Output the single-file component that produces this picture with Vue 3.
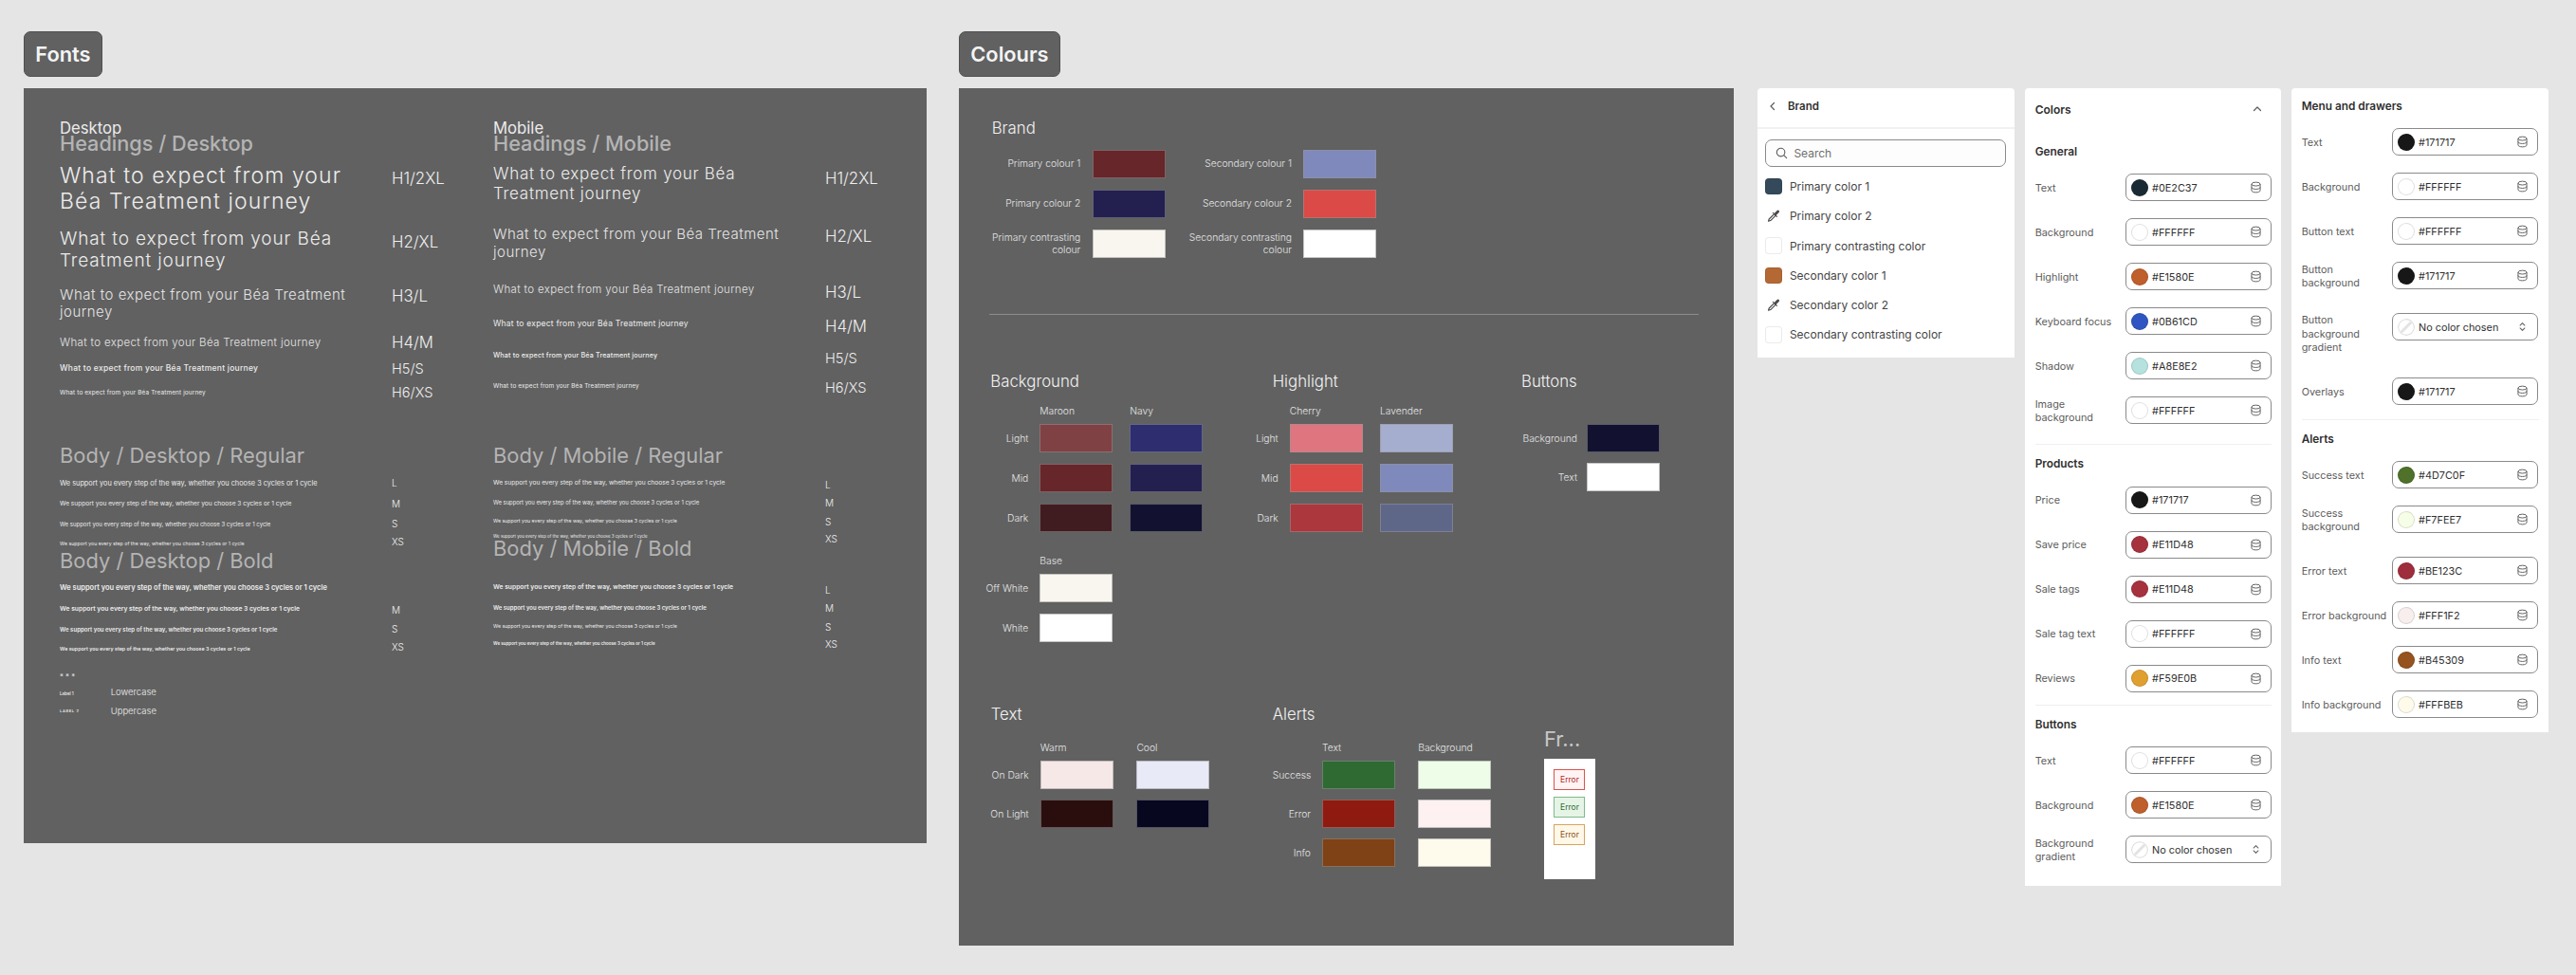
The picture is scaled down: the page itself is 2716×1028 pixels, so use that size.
<script setup>
const JOURNEY = 'What to expect from your Béa Treatment journey'
const BODY = 'We support you every step of the way, whether you choose 3 cycles or 1 cycle'

const desktop = [
  { t: 'Desktop', c: 'kicker', h: 18, mt: 33 },
  { t: 'Headings / Desktop', c: 'gtitle', h: 24, mt: -5 },
  { t: JOURNEY, c: 'd1', h: 71.7, lab: 'H1/2XL', d: -11 },
  { t: JOURNEY, c: 'd2', h: 57.6, lab: 'H2/XL', d: -8.5 },
  { t: JOURNEY, c: 'd3', h: 55.4, lab: 'H3/L', d: -8 },
  { t: JOURNEY, c: 'd4', h: 26, lab: 'H4/M', d: 0.3 },
  { t: JOURNEY, c: 'd5', h: 30.6, lab: 'H5/S', lc: 'small' },
  { t: JOURNEY, c: 'd6', h: 19.4, lab: 'H6/XS', lc: 'small' },
  { t: 'Body / Desktop / Regular', c: 'btitle', h: 30, mt: 41.3 },
  { t: BODY, c: 'dl', h: 28.6, lab: 'L', lc: 'tiny', d: -0.6 },
  { t: BODY, c: 'dm', h: 16.2, lab: 'M', lc: 'tiny', d: -1 },
  { t: BODY, c: 'ds', h: 26.4, lab: 'S', lc: 'tiny', d: -1.3 },
  { t: BODY, c: 'dx', h: 14.2, lab: 'XS', lc: 'tiny', d: -2.3 },
  { t: 'Body / Desktop / Bold', c: 'btitle', h: 30, mt: -4.4 },
  { t: BODY, c: 'dbl', h: 28.6 },
  { t: BODY, c: 'dbm', h: 16.2, lab: 'M', lc: 'tiny' },
  { t: BODY, c: 'dbs', h: 26.4, lab: 'S', lc: 'tiny', d: -0.7 },
  { t: BODY, c: 'dbx', h: 14.2, lab: 'XS', lc: 'tiny', d: -2 },
]
const mobile = [
  { t: 'Mobile', c: 'kicker', h: 18, mt: 33 },
  { t: 'Headings / Mobile', c: 'gtitle', h: 24, mt: -5 },
  { t: JOURNEY, c: 'm1', h: 62, lab: 'H1/2XL', d: -6 },
  { t: JOURNEY, c: 'm2', h: 63, lab: 'H2/XL', d: -7.2 },
  { t: JOURNEY, c: 'm3', h: 33.4, lab: 'H3/L', d: 3 },
  { t: JOURNEY, c: 'm4', h: 39.8, lab: 'H4/M', d: 2.4 },
  { t: JOURNEY, c: 'm5', h: 27, lab: 'H5/S', lc: 'small', d: 3 },
  { t: JOURNEY, c: 'm6', h: 37, lab: 'H6/XS', lc: 'small', d: 2.6 },
  { t: 'Body / Mobile / Regular', c: 'btitle', h: 30, mt: 39.8 },
  { t: BODY, c: 'ml', h: 28, lab: 'L', lc: 'tiny', d: 2 },
  { t: BODY, c: 'mm', h: 14, lab: 'M', lc: 'tiny', d: 0.3 },
  { t: BODY, c: 'ms', h: 26, lab: 'S', lc: 'tiny' },
  { t: BODY, c: 'mx', h: 6.6, lab: 'XS', lc: 'tiny', d: 1.4 },
  { t: 'Body / Mobile / Bold', c: 'btitle', h: 30, mt: -6.6 },
  { t: BODY, c: 'mbl', h: 20, mt: 16.7, lab: 'L', lc: 'tiny', d: 2 },
  { t: BODY, c: 'mbm', h: 22.6, lab: 'M', lc: 'tiny', d: 0.3 },
  { t: BODY, c: 'ms', h: 17.4, lab: 'S', lc: 'tiny' },
  { t: BODY, c: 'mbx', h: 18.6, lab: 'XS', lc: 'tiny' },
]
function rowStyle(r) {
  return { height: r.h + 'px', marginTop: (r.mt || 0) + 'px' }
}
function labStyle(r) {
  const d = r.d || 0
  return d > 0 ? { marginTop: 2 * d + 'px' } : { marginBottom: -2 * d + 'px' }
}

const brandLeft = [
  { l: 'Primary colour 1', c: '#66262a' },
  { l: 'Primary colour 2', c: '#232050' },
  { l: 'Primary contrasting colour', c: '#f9f6ef' },
]
const brandRight = [
  { l: 'Secondary colour 1', c: '#7f89bb' },
  { l: 'Secondary colour 2', c: '#db4a47' },
  { l: 'Secondary contrasting colour', c: '#ffffff' },
]
const bgRows = [
  { l: 'Light', c: ['#804144', '#2d2d70'] },
  { l: 'Mid', c: ['#66262a', '#232050'] },
  { l: 'Dark', c: ['#401c20', '#121230'] },
]
const hlRows = [
  { l: 'Light', c: ['#de757f', '#a6aed0'] },
  { l: 'Mid', c: ['#db4a47', '#7f89bb'] },
  { l: 'Dark', c: ['#ac373c', '#5f6789'] },
]
const baseRows = [
  { l: 'Off White', c: ['#f9f6ef'] },
  { l: 'White', c: ['#ffffff'] },
]
const btnRows = [
  { l: 'Background', c: ['#121230'] },
  { l: 'Text', c: ['#ffffff'] },
]
const textRows = [
  { l: 'On Dark', c: ['#f7e8e8', '#e8eaf7'] },
  { l: 'On Light', c: ['#2a0e0e', '#070720'] },
]
const alertRows = [
  { l: 'Success', c: ['#2f6a33', '#eefde8'] },
  { l: 'Error', c: ['#8f1a10', '#fdf1f1'] },
  { l: 'Info', c: ['#7f4116', '#fefbec'] },
]

const brandList = [
  { l: 'Primary color 1', c: '#344a5a' },
  { l: 'Primary color 2', pick: true },
  { l: 'Primary contrasting color', c: '#ffffff' },
  { l: 'Secondary color 1', c: '#b46935' },
  { l: 'Secondary color 2', pick: true },
  { l: 'Secondary contrasting color', c: '#ffffff' },
]

const colorSections = [
  { title: 'General', rows: [
    { l: 'Text', c: '#1a2a35', v: '#0E2C37' },
    { l: 'Background', c: '#ffffff', v: '#FFFFFF' },
    { l: 'Highlight', c: '#bf5f2c', v: '#E1580E' },
    { l: 'Keyboard focus', c: '#2f55c2', v: '#0B61CD' },
    { l: 'Shadow', c: '#b5e2de', v: '#A8E8E2' },
    { l: 'Image background', c: '#ffffff', v: '#FFFFFF', end: true },
  ] },
  { title: 'Products', rows: [
    { l: 'Price', c: '#171717', v: '#171717' },
    { l: 'Save price', c: '#a6323e', v: '#E11D48' },
    { l: 'Sale tags', c: '#a6323e', v: '#E11D48' },
    { l: 'Sale tag text', c: '#ffffff', v: '#FFFFFF' },
    { l: 'Reviews', c: '#e0a030', v: '#F59E0B', short: true },
  ] },
  { title: 'Buttons', rows: [
    { l: 'Text', c: '#ffffff', v: '#FFFFFF' },
    { l: 'Background', c: '#bf5f2c', v: '#E1580E' },
    { l: 'Background gradient', none: true },
  ] },
]
const menuSections = [
  { title: 'Menu and drawers', rows: [
    { l: 'Text', c: '#171717', v: '#171717' },
    { l: 'Background', c: '#ffffff', v: '#FFFFFF' },
    { l: 'Button text', c: '#ffffff', v: '#FFFFFF' },
    { l: 'Button background', c: '#171717', v: '#171717', tall: true },
    { l: 'Button background gradient', none: true, tall: true },
    { l: 'Overlays', c: '#171717', v: '#171717' },
  ] },
  { title: 'Alerts', rows: [
    { l: 'Success text', c: '#4f7129', v: '#4D7C0F' },
    { l: 'Success background', c: '#f7fee7', v: '#F7FEE7', tall: true },
    { l: 'Error text', c: '#9f2e3d', v: '#BE123C' },
    { l: 'Error background', c: '#f8eeee', v: '#FFF1F2' },
    { l: 'Info text', c: '#96531f', v: '#B45309' },
    { l: 'Info background', c: '#fffbeb', v: '#FFFBEB' },
  ] },
]
</script>

<template>
  <div class="canvas">
    <section class="area">
      <div class="tag">Fonts</div>
      <div class="frame fonts">
        <div v-for="(col, i) in [desktop, mobile]" :key="i" class="col">
          <div v-for="(r, j) in col" :key="j" class="row" :style="rowStyle(r)">
            <div class="txt" :class="r.c">{{ r.t }}</div>
            <div v-if="r.lab" class="lab" :class="r.lc" :style="labStyle(r)">{{ r.lab }}</div>
          </div>
          <template v-if="i === 0">
            <div class="dots">* * *</div>
            <div class="lrow first"><span class="label1">Label 1</span><span class="lname">Lowercase</span></div>
            <div class="lrow"><span class="label2">LABEL 2</span><span class="lname">Uppercase</span></div>
          </template>
        </div>
      </div>
    </section>

    <section class="area">
      <div class="tag">Colours</div>
      <div class="frame colours">
        <h3 class="cap brand-cap">Brand</h3>
        <div class="brand-cols">
          <div class="brand-col">
            <div v-for="s in brandLeft" :key="s.l" class="sw-row">
              <span class="sw-label bl">{{ s.l }}</span>
              <span class="sw" :style="{ background: s.c }"></span>
            </div>
          </div>
          <div class="brand-col">
            <div v-for="s in brandRight" :key="s.l" class="sw-row">
              <span class="sw-label br">{{ s.l }}</span>
              <span class="sw" :style="{ background: s.c }"></span>
            </div>
          </div>
        </div>
        <div class="rule"></div>

        <div class="groups one">
          <div class="group g-bg">
            <h3 class="cap">Background</h3>
            <div class="heads"><span class="head">Maroon</span><span class="head">Navy</span></div>
            <div v-for="r in bgRows" :key="r.l" class="gr">
              <span class="gl">{{ r.l }}</span>
              <span v-for="c in r.c" :key="c" class="sw" :style="{ background: c }"></span>
            </div>
            <div class="heads base"><span class="head">Base</span></div>
            <div v-for="r in baseRows" :key="r.l" class="gr">
              <span class="gl">{{ r.l }}</span>
              <span v-for="c in r.c" :key="c" class="sw" :style="{ background: c }"></span>
            </div>
          </div>
          <div class="group g-hl">
            <h3 class="cap">Highlight</h3>
            <div class="heads"><span class="head">Cherry</span><span class="head">Lavender</span></div>
            <div v-for="r in hlRows" :key="r.l" class="gr">
              <span class="gl">{{ r.l }}</span>
              <span v-for="c in r.c" :key="c" class="sw" :style="{ background: c }"></span>
            </div>
          </div>
          <div class="group g-btn">
            <h3 class="cap">Buttons</h3>
            <div class="heads"></div>
            <div v-for="r in btnRows" :key="r.l" class="gr">
              <span class="gl">{{ r.l }}</span>
              <span v-for="c in r.c" :key="c" class="sw" :style="{ background: c }"></span>
            </div>
          </div>
        </div>

        <div class="groups two">
          <div class="group g-text">
            <h3 class="cap">Text</h3>
            <div class="heads"><span class="head">Warm</span><span class="head">Cool</span></div>
            <div v-for="r in textRows" :key="r.l" class="gr">
              <span class="gl">{{ r.l }}</span>
              <span v-for="c in r.c" :key="c" class="sw" :style="{ background: c }"></span>
            </div>
          </div>
          <div class="group g-alert">
            <h3 class="cap">Alerts</h3>
            <div class="heads"><span class="head">Text</span><span class="head">Background</span></div>
            <div v-for="r in alertRows" :key="r.l" class="gr">
              <span class="gl">{{ r.l }}</span>
              <span v-for="c in r.c" :key="c" class="sw" :style="{ background: c }"></span>
            </div>
          </div>
          <div class="group g-fr">
            <div class="fr-title">Fr...</div>
            <div class="fr-card">
              <span class="chip err">Error</span>
              <span class="chip ok">Error</span>
              <span class="chip warn">Error</span>
            </div>
          </div>
        </div>
      </div>
    </section>

    <div class="panel brand-panel">
      <div class="bp-head">
        <svg class="ic-back" viewBox="0 0 12 12"><path d="M7.5 2.5 4 6l3.5 3.5" /></svg>
        <span class="bp-title">Brand</span>
      </div>
      <div class="bp-body">
        <div class="search">
          <svg class="ic-search" viewBox="0 0 14 14"><circle cx="6" cy="6" r="4.6" /><path d="m9.4 9.4 3.2 3.2" /></svg>
          <span>Search</span>
        </div>
        <div v-for="b in brandList" :key="b.l" class="bp-item">
          <svg v-if="b.pick" class="ic-pick" viewBox="0 0 20 20">
            <path class="pk-body" d="M11 7.5 4.8 13.7 4 16.3l2.6-.8L12.8 9.3" />
            <path class="pk-line" d="m9.6 6.2 4.6 4.6" />
            <path class="pk-head" d="M12.5 7.8 15.6 4.6" />
          </svg>
          <span v-else class="bp-sw" :style="{ background: b.c }"></span>
          <span>{{ b.l }}</span>
        </div>
      </div>
    </div>

    <div class="panel colors-panel">
      <div class="cp-head">
        <span>Colors</span>
        <svg class="ic-up" viewBox="0 0 12 12"><path d="M2.5 7.5 6 4l3.5 3.5" /></svg>
      </div>
      <div v-for="(sec, i) in colorSections" :key="sec.title" class="sec" :class="{ ruled: i > 0 }">
        <div class="sec-title">{{ sec.title }}</div>
        <div v-for="r in sec.rows" :key="r.l" class="pr" :class="{ tall: r.tall, end: r.end, short: r.short }">
          <div class="pr-label">{{ r.l }}</div>
          <div class="field">
            <svg v-if="r.none" class="dot" viewBox="0 0 18 18">
              <circle cx="9" cy="9" r="8.4" fill="#fff" stroke="#dedede" stroke-width="1.2" />
              <path d="M3.8 14.2 14.2 3.8" stroke="#e3e3e3" stroke-width="3" />
            </svg>
            <span v-else class="dot" :style="{ background: r.c }"></span>
            <span class="val">{{ r.none ? 'No color chosen' : r.v }}</span>
            <svg v-if="r.none" class="ic-sel" viewBox="0 0 16 16"><path d="M5 6.2 8 3.2l3 3M5 9.8l3 3 3-3" /></svg>
            <svg v-else class="ic-db" viewBox="0 0 16 16">
              <ellipse cx="8" cy="3.8" rx="5.6" ry="2.4" />
              <path d="M2.4 3.8v8.4c0 1.3 2.5 2.4 5.6 2.4s5.6-1.1 5.6-2.4V3.8M2.4 8c0 1.3 2.5 2.4 5.6 2.4s5.6-1.1 5.6-2.4" />
            </svg>
          </div>
        </div>
      </div>
    </div>

    <div class="panel menu-panel">
      <div v-for="(sec, i) in menuSections" :key="sec.title" class="sec" :class="{ ruled: i > 0, top: i === 0 }">
        <div class="sec-title">{{ sec.title }}</div>
        <div v-for="r in sec.rows" :key="r.l" class="pr" :class="{ tall: r.tall }">
          <div class="pr-label">{{ r.l }}</div>
          <div class="field">
            <svg v-if="r.none" class="dot" viewBox="0 0 18 18">
              <circle cx="9" cy="9" r="8.4" fill="#fff" stroke="#dedede" stroke-width="1.2" />
              <path d="M3.8 14.2 14.2 3.8" stroke="#e3e3e3" stroke-width="3" />
            </svg>
            <span v-else class="dot" :style="{ background: r.c }"></span>
            <span class="val">{{ r.none ? 'No color chosen' : r.v }}</span>
            <svg v-if="r.none" class="ic-sel" viewBox="0 0 16 16"><path d="M5 6.2 8 3.2l3 3M5 9.8l3 3 3-3" /></svg>
            <svg v-else class="ic-db" viewBox="0 0 16 16">
              <ellipse cx="8" cy="3.8" rx="5.6" ry="2.4" />
              <path d="M2.4 3.8v8.4c0 1.3 2.5 2.4 5.6 2.4s5.6-1.1 5.6-2.4V3.8M2.4 8c0 1.3 2.5 2.4 5.6 2.4s5.6-1.1 5.6-2.4" />
            </svg>
          </div>
        </div>
      </div>
    </div>
  </div>
</template>

<style>
html, body { margin: 0; background: #e5e5e5; overflow: hidden; }
</style>

<style scoped>
* { box-sizing: border-box; }
.canvas {
  display: flex;
  align-items: flex-start;
  width: 2716px;
  height: 1028px;
  padding: 33px 0 0 25px;
  background: #e5e5e5;
  font-family: Inter, "Liberation Sans", sans-serif;
  overflow: hidden;
}
.area { flex: none; margin-right: 34px; }
.area:nth-child(2) { margin-right: 25px; }
.tag {
  width: max-content;
  height: 48px;
  padding: 0 11.3px;
  border: 1px solid #505050;
  border-radius: 7px;
  background: #616161;
  color: #f4f4f4;
  font-size: 21.8px;
  font-weight: 600;
  line-height: 46px;
}
.frame { margin-top: 12px; background: #616161; }
.fonts { display: flex; width: 952px; height: 796px; padding-left: 38px; }
.colours { width: 817px; height: 904px; padding-top: 30.7px; }

.col { flex: none; width: 457px; }
.row { display: flex; align-items: center; }
.txt { flex: none; width: 350px; padding-right: 8px; color: #ececec; line-height: 1; }
.lab { color: #eeeeee; font-size: 16.8px; font-weight: 300; line-height: 20px; white-space: nowrap; }
.lab.small { font-size: 14.6px; }
.lab.tiny { font-size: 10px; line-height: 12px; }

.kicker { font-size: 16.7px; font-weight: 400; line-height: 18px; }
.gtitle { color: #b4b4b4; font-size: 21.7px; font-weight: 500; line-height: 24px; white-space: nowrap; }
.btitle { color: #b4b4b4; font-size: 21.9px; font-weight: 400; line-height: 30px; white-space: nowrap; }

.d1 { font-size: 23px; font-weight: 300; letter-spacing: 1.1px; line-height: 26.7px; }
.d2 { font-size: 19px; font-weight: 300; letter-spacing: .86px; line-height: 23px; }
.d3 { font-size: 15px; font-weight: 300; letter-spacing: .5px; line-height: 18.3px; color: #e4e4e4; }
.d4 { font-size: 11.5px; font-weight: 300; letter-spacing: .34px; line-height: 14px; color: #e4e4e4; }
.d5 { font-size: 8.5px; font-weight: 500; letter-spacing: .25px; line-height: 11px; }
.d6 { font-size: 6.4px; font-weight: 400; letter-spacing: .145px; line-height: 8px; }
.m1 { font-size: 17px; font-weight: 300; letter-spacing: .72px; line-height: 21.4px; }
.m2 { font-size: 15px; font-weight: 300; letter-spacing: .5px; line-height: 18.4px; color: #e4e4e4; }
.m3 { font-size: 11.5px; font-weight: 300; letter-spacing: .34px; line-height: 14px; color: #e4e4e4; }
.m4 { font-size: 8.5px; font-weight: 400; letter-spacing: .22px; line-height: 11px; }
.m5 { font-size: 7.2px; font-weight: 500; letter-spacing: .13px; line-height: 9px; }
.m6 { font-size: 6.4px; font-weight: 400; letter-spacing: .145px; line-height: 8px; }

.dl { font-size: 7.34px; }
.dm { font-size: 6.6px; }
.ds { font-size: 6px; }
.dx { font-size: 5.26px; }
.dbl { font-size: 7.49px; font-weight: 600; }
.dbm { font-size: 6.72px; font-weight: 600; }
.dbs { font-size: 6.1px; font-weight: 600; }
.dbx { font-size: 5.34px; font-weight: 600; }
.ml { font-size: 6.6px; }
.mm { font-size: 5.86px; }
.ms { font-size: 5.24px; }
.mx { font-size: 4.4px; }
.mbl { font-size: 6.72px; font-weight: 600; }
.mbm { font-size: 5.97px; font-weight: 600; }
.mbx { font-size: 4.54px; font-weight: 600; }

.dots { height: 12px; margin-top: 14.9px; color: #e8e8e8; font-size: 7.8px; line-height: 14px; }
.lrow { display: flex; align-items: center; height: 16.6px; color: #f0f0f0; }
.lrow.first { height: 23.4px; }
.label1 { flex: none; width: 53.7px; margin-top: 4px; font-size: 4.5px; font-weight: 500; }
.label2 { flex: none; width: 53.7px; font-size: 4.1px; font-weight: 500; letter-spacing: .6px; }
.lname { font-size: 9.5px; font-weight: 300; }

.cap { margin: 0; color: #f2f2f2; font-size: 16.8px; font-weight: 300; line-height: 22px; }
.brand-cap { margin-left: 34.7px; }
.brand-cols { display: flex; gap: 24.3px; margin: 12.3px 0 0 31px; }
.brand-col { display: flex; flex-direction: column; gap: 12px; }
.sw-row { display: flex; align-items: center; gap: 12.4px; }
.sw-label {
  color: #e4e4e4;
  font-size: 10.3px;
  font-weight: 300;
  line-height: 13px;
  text-align: right;
}
.bl { width: 97.3px; }
.br { width: 109px; }
.sw {
  flex: none;
  width: 77px;
  height: 30px;
  border: 1px solid rgba(150, 150, 150, .55);
}
.rule { width: 748.5px; height: 1px; margin: 59.3px 0 0 31.7px; background: #8d8d8d; }

.groups { display: flex; }
.groups.one { margin-top: 58.4px; padding-left: 33.3px; }
.groups.two { margin-top: 65px; padding-left: 33.7px; }
.group { flex: none; }
.heads { display: flex; margin-top: 13.6px; height: 14px; }
.head { color: #e4e4e4; font-size: 10.3px; font-weight: 300; line-height: 14px; }
.base { margin-top: 22.7px; }
.gr { display: flex; align-items: center; margin-top: 12px; }
.heads + .gr { margin-top: 7px; }
.gl {
  flex: none;
  color: #e4e4e4;
  font-size: 10.3px;
  font-weight: 300;
  text-align: right;
}

.g-bg { width: 297.4px; }
.g-bg .gl { width: 45px; margin: 0 12px 0 -5px; }
.g-bg .heads { padding-left: 52px; }
.g-bg .head { width: 95px; }
.g-bg .gr .sw + .sw { margin-left: 18px; }

.g-hl { width: 262.3px; }
.g-hl .gl { width: 24px; margin: 0 12px 0 -18px; }
.g-hl .heads { padding-left: 18px; }
.g-hl .head { width: 95.3px; }
.g-hl .gr .sw + .sw { margin-left: 18.3px; }

.g-btn .gl { width: 59px; margin-right: 10px; }
.g-btn .gr + .gr { margin-top: 11px; }

.g-text { width: 297px; }
.g-text .heads, .g-alert .heads { margin-top: 17.3px; }
.g-text .gr, .g-alert .gr { margin-top: 11px; }
.g-text .heads + .gr, .g-alert .heads + .gr { margin-top: 6.7px; }
.g-text .gl { width: 45px; margin: 0 12px 0 -5px; }
.g-text .heads { padding-left: 52px; }
.g-text .head { width: 101.7px; }
.g-text .gr .sw + .sw { margin-left: 24.7px; }

.g-alert { width: 286.3px; }
.g-alert .gl { width: 40.3px; margin-right: 12px; }
.g-alert .heads { padding-left: 52.3px; }
.g-alert .head { width: 101.3px; }
.g-alert .gr .sw + .sw { margin-left: 24.3px; }

.fr-title { margin-top: 26.3px; color: #c8c8c8; font-size: 22px; font-weight: 400; line-height: 22px; }
.fr-card {
  display: flex;
  flex-direction: column;
  align-items: center;
  gap: 7px;
  width: 54px;
  height: 127px;
  margin-top: 10px;
  padding-top: 11px;
  background: #fff;
}
.chip {
  width: 33px;
  height: 22px;
  border: 1px solid;
  font-size: 8.5px;
  line-height: 20px;
  text-align: center;
}
.chip.err { border-color: #d9534f; background: #fff3f3; color: #b3261e; }
.chip.ok { border-color: #7fb98a; background: #e6f4e6; color: #2f6a33; }
.chip.warn { border-color: #d9a25f; background: #fdf8e8; color: #8f4f14; }

.panel { flex: none; margin-top: 60px; background: #fff; color: #303030; }

.brand-panel {
  width: 271px;
  height: 284px;
  margin-right: 11px;
  border-radius: 4px 4px 0 0;
  font-size: 12px;
}
.bp-head {
  display: flex;
  align-items: center;
  height: 43px;
  padding: 0 0 3px 10px;
  border-bottom: 2px solid #f1f1f1;
}
.ic-back { width: 12px; height: 12px; fill: none; stroke: #5c5c5c; stroke-width: 1.2; stroke-linecap: round; stroke-linejoin: round; }
.bp-title { margin-left: 10px; font-size: 11.5px; font-weight: 600; }
.bp-body { padding: 10.7px 9px 0 8.4px; }
.search {
  display: flex;
  align-items: center;
  gap: 6px;
  height: 29px;
  padding-left: 10px;
  border: 1px solid #8a8a8a;
  border-radius: 7px;
  color: #6f6f6f;
  background: #fdfdfd;
}
.ic-search { width: 13px; height: 13px; fill: none; stroke: #5c5c5c; stroke-width: 1.2; stroke-linecap: round; }
.bp-item { display: flex; align-items: center; gap: 8px; height: 31.33px; color: #454545; }
.search + .bp-item { margin-top: 5px; }
.bp-sw { flex: none; width: 17.5px; height: 17.5px; border: 1px solid rgba(0, 0, 0, .08); border-radius: 4px; }
.ic-pick { flex: none; width: 17.5px; height: 17.5px; fill: none; stroke: #4a4a4a; stroke-linecap: round; stroke-linejoin: round; }
.pk-body, .pk-line { stroke-width: 1.3; }
.pk-head { stroke-width: 3.2; }

.colors-panel {
  width: 270px;
  height: 841px;
  margin-right: 11px;
  border-radius: 4px 4px 0 0;
}
.cp-head {
  display: flex;
  align-items: center;
  justify-content: space-between;
  height: 44px;
  padding: 0 18.6px 0 10.7px;
  font-size: 12px;
  font-weight: 600;
}
.ic-up { width: 12px; height: 12px; fill: none; stroke: #5c5c5c; stroke-width: 1.2; stroke-linecap: round; stroke-linejoin: round; }

.menu-panel { width: 271px; height: 679px; border-radius: 4px 4px 0 0; }

.sec { padding: 0 10.3px 0 10.7px; }
.sec-title { height: 16px; margin: 15.3px 0 15px; font-size: 11.8px; font-weight: 600; line-height: 16px; }
.sec.top .sec-title { margin-top: 11.3px; margin-bottom: 15px; }
.sec.ruled::before {
  content: "";
  display: block;
  height: 1px;
  background: #efefef;
}
.sec.ruled .sec-title { margin-top: 11.7px; margin-bottom: 15.6px; }
.pr { display: flex; margin-bottom: 18px; }
.pr.tall { margin-bottom: 25px; }
.pr:last-child { margin-bottom: 15px; }
.pr.end:last-child { margin-bottom: 21px; }
.pr.short:last-child { margin-bottom: 13.5px; }
.pr-label {
  display: flex;
  align-items: center;
  flex: none;
  width: 95.6px;
  min-height: 29px;
  padding-right: 5px;
  color: #5c5c5c;
  font-size: 10.85px;
  line-height: 14.3px;
  align-self: flex-start;
}
.field {
  display: flex;
  flex: none;
  align-items: center;
  width: 153.4px;
  height: 29px;
  padding: 0 9px 0 5px;
  border: 1px solid #8a8a8a;
  border-radius: 7px;
}
.dot { flex: none; width: 18px; height: 18px; border: 1.2px solid rgba(0, 0, 0, .12); border-radius: 50%; }
svg.dot { border: 0; }
.val { flex: 1; margin-left: 3.8px; color: #303030; font-size: 10.85px; white-space: nowrap; }
.ic-db { flex: none; width: 13px; height: 13px; fill: none; stroke: #5f5f5f; stroke-width: 1.2; }
.ic-sel { flex: none; width: 13px; height: 13px; fill: none; stroke: #5f5f5f; stroke-width: 1.3; stroke-linecap: round; stroke-linejoin: round; }
</style>
